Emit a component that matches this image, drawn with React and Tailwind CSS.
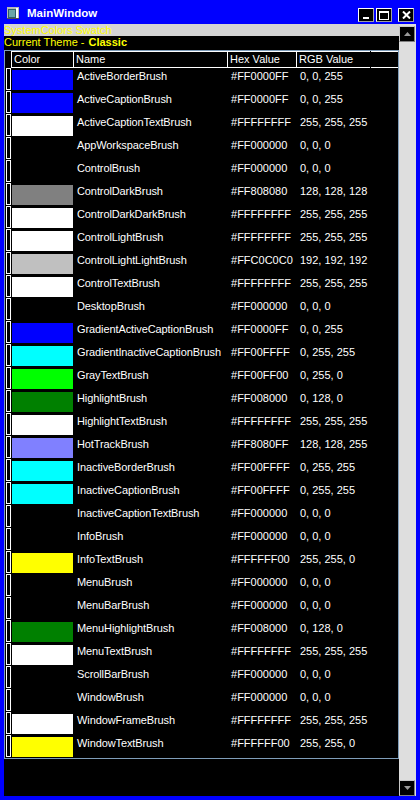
import React from 'react';

const brushes = [
  ['ActiveBorderBrush', 'FF0000FF'],
  ['ActiveCaptionBrush', 'FF0000FF'],
  ['ActiveCaptionTextBrush', 'FFFFFFFF'],
  ['AppWorkspaceBrush', 'FF000000'],
  ['ControlBrush', 'FF000000'],
  ['ControlDarkBrush', 'FF808080'],
  ['ControlDarkDarkBrush', 'FFFFFFFF'],
  ['ControlLightBrush', 'FFFFFFFF'],
  ['ControlLightLightBrush', 'FFC0C0C0'],
  ['ControlTextBrush', 'FFFFFFFF'],
  ['DesktopBrush', 'FF000000'],
  ['GradientActiveCaptionBrush', 'FF0000FF'],
  ['GradientInactiveCaptionBrush', 'FF00FFFF'],
  ['GrayTextBrush', 'FF00FF00'],
  ['HighlightBrush', 'FF008000'],
  ['HighlightTextBrush', 'FFFFFFFF'],
  ['HotTrackBrush', 'FF8080FF'],
  ['InactiveBorderBrush', 'FF00FFFF'],
  ['InactiveCaptionBrush', 'FF00FFFF'],
  ['InactiveCaptionTextBrush', 'FF000000'],
  ['InfoBrush', 'FF000000'],
  ['InfoTextBrush', 'FFFFFF00'],
  ['MenuBrush', 'FF000000'],
  ['MenuBarBrush', 'FF000000'],
  ['MenuHighlightBrush', 'FF008000'],
  ['MenuTextBrush', 'FFFFFFFF'],
  ['ScrollBarBrush', 'FF000000'],
  ['WindowBrush', 'FF000000'],
  ['WindowFrameBrush', 'FFFFFFFF'],
  ['WindowTextBrush', 'FFFFFF00'],
];

function toRgb(hex) {
  const r = parseInt(hex.slice(2, 4), 16);
  const g = parseInt(hex.slice(4, 6), 16);
  const b = parseInt(hex.slice(6, 8), 16);
  return `${r}, ${g}, ${b}`;
}

function CaptionButton({ children }) {
  return (
    <div className="w-[16px] h-[14px] bg-black border border-t-white border-l-white border-r-[#a0a0a0] border-b-[#a0a0a0] flex items-center justify-center">
      {children}
    </div>
  );
}

function ScrollButton({ down }) {
  return (
    <div className="w-[16px] h-[16px] bg-black border border-t-[#c8c8c8] border-l-[#c8c8c8] border-r-[#808080] border-b-[#808080] flex items-center justify-center">
      <svg width="7" height="4" viewBox="0 0 7 4">
        {down ? (
          <polygon points="0,0 7,0 3.5,4" fill="#9a9a9a" />
        ) : (
          <polygon points="0,4 7,4 3.5,0" fill="#9a9a9a" />
        )}
      </svg>
    </div>
  );
}

function App() {
  return (
    <div className="w-[420px] h-[800px] bg-[#0000ff] flex flex-col font-['Liberation_Sans',Arial,sans-serif] overflow-hidden">
      {/* title bar */}
      <div className="h-[24px] flex items-start shrink-0">
        <svg className="ml-[7px] mt-[7px]" width="12" height="12" viewBox="0 0 12 12">
          <rect x="0" y="0" width="12" height="12" fill="#b8b8b8" />
          <rect x="1" y="2" width="8" height="9" fill="#2f5f6a" />
          <rect x="2" y="3" width="6" height="7" fill="#6aa6a8" />
          <rect x="9" y="1" width="2" height="10" fill="#ffffff" />
          <rect x="0" y="11" width="12" height="1" fill="#505050" />
        </svg>
        <span className="ml-[8px] mt-[7px] text-white font-bold text-[11.5px] leading-[12px]">MainWindow</span>
        <div className="ml-auto mt-[8px] mr-[6px] flex">
          <CaptionButton>
            <svg width="8" height="8" viewBox="0 0 8 8">
              <rect x="1" y="6" width="6" height="2" fill="#fff" />
            </svg>
          </CaptionButton>
          <div className="ml-[2px]">
            <CaptionButton>
              <svg width="10" height="9" viewBox="0 0 10 9">
                <rect x="0.5" y="0.5" width="9" height="8" fill="none" stroke="#fff" />
                <rect x="0" y="0" width="10" height="2" fill="#fff" />
              </svg>
            </CaptionButton>
          </div>
          <div className="ml-[6px]">
            <CaptionButton>
              <svg width="9" height="8" viewBox="0 0 9 8">
                <path d="M1 0.5 L8 7.5 M8 0.5 L1 7.5" stroke="#fff" strokeWidth="2" />
              </svg>
            </CaptionButton>
          </div>
        </div>
      </div>

      {/* body */}
      <div className="flex-1 flex mx-[4px] mb-[4px] min-h-0">
        <div className="flex-1 bg-black flex flex-col min-w-0">
          <div className="h-[12px] bg-[#d4d4d4] text-[#ffff00] text-[11px] leading-[12px]">SystemColors Swatch</div>
          <div className="h-[12px] text-[#ffff00] text-[11px] leading-[12px] flex">
            <span>Current Theme -</span>
            <span className="ml-[4px] font-bold">Classic</span>
          </div>

          <div className="mt-[2px] border border-[#7f9db9] flex flex-col">
            {/* header */}
            <div className="h-[17px] flex text-white text-[11px] leading-[15px]">
              <div className="w-[6px]" />
              <div className="w-[63px] border border-white pl-[2px]">Color</div>
              <div className="w-[154px] border-y border-r border-white pl-[2px]">Name</div>
              <div className="w-[69px] border-y border-r border-white pl-[2px]">Hex Value</div>
              <div className="w-[73px] border-y border-white pl-[2px]">RGB Value</div>
              <div className="flex-1 ml-[1px] border-y border-white" />
            </div>

            {/* rows */}
            {brushes.map(([name, hex]) => (
              <div key={name} className="h-[23px] flex text-white text-[11px] leading-[13px]">
                <div className="w-[6px] pl-[1px]">
                  <div className="w-[5px] h-[22px] border border-white" />
                </div>
                <div className="w-[63px] pl-[1px] pt-[2px]">
                  <div className="w-[61px] h-[20px]" style={{ backgroundColor: '#' + hex.slice(2) }} />
                </div>
                <div className="w-[154px] pl-[3px] pt-[2px] whitespace-nowrap tracking-[-0.1px]">{name}</div>
                <div className="w-[69px] pl-[3px] pt-[2px] whitespace-nowrap">#{hex}</div>
                <div className="w-[73px] pl-[3px] pt-[2px] whitespace-nowrap">{toRgb(hex)}</div>
                <div className="flex-1" />
              </div>
            ))}
          </div>
        </div>

        {/* scrollbar */}
        <div className="w-[17px] bg-[#dedede] flex flex-col justify-between shrink-0">
          <div className="mt-[2px]">
            <ScrollButton />
          </div>
          <ScrollButton down />
        </div>
      </div>
    </div>
  );
}

export default App;
